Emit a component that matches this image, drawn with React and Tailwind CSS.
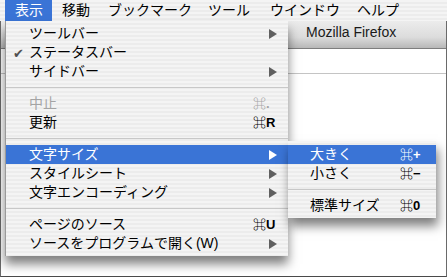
import React from 'react';

const FONT = { fontFamily: '"Liberation Sans", "Noto Sans CJK JP", "DejaVu Sans", sans-serif' };

const stripes =
  'bg-[repeating-linear-gradient(180deg,#f4f4f4_0px,#f4f4f4_2px,#ececec_2px,#ececec_4px)]';

function Arrow({ light }) {
  return (
    <svg width="8" height="10" viewBox="0 0 8 10" className="shrink-0">
      <path d="M0 0 L8 5 L0 10 Z" fill={light ? '#ffffff' : '#5f5f5f'} />
    </svg>
  );
}

function Row({ label, check, shortcut, arrow, disabled, active, pl = 'pl-[23px]', pr = 'pr-[11px]', scW = 'w-[24px]' }) {
  const color = active ? 'text-white' : disabled ? 'text-[#a4a4a4]' : 'text-black';
  return (
    <div className={`relative flex h-[19px] items-center ${pl} ${pr} ${active ? 'bg-[#3a74d6]' : ''} ${color}`}>
      {check && (
        <span className="absolute left-[7px] top-[1px] text-[13px] text-[#505050]">✔</span>
      )}
      <span className="flex-1 text-[14px] leading-[19px] whitespace-nowrap">{label}</span>
      {shortcut && (
        <span className={`${scW} font-semibold text-[13px] leading-[19px] whitespace-nowrap`}>
          {shortcut}
        </span>
      )}
      {arrow && <Arrow light={active} />}
    </div>
  );
}

function Sep() {
  return (
    <div className="flex h-[13px] items-center">
      <div className="h-px w-full bg-[#c8c8c8]" />
    </div>
  );
}

export default function App() {
  const menus = [
    { t: '表示', w: 'w-[47px]', active: true },
    { t: '移動', w: 'w-[46px]' },
    { t: 'ブックマーク', w: 'w-[100px]' },
    { t: 'ツール', w: 'w-[62px]' },
    { t: 'ウインドウ', w: 'w-[87px]' },
    { t: 'ヘルプ', w: 'w-[80px]' },
  ];

  return (
    <div className="relative flex h-[277px] w-[447px] flex-col overflow-hidden bg-white" style={FONT}>
      {/* Menu bar */}
      <div className={`flex h-[21px] shrink-0 items-stretch pl-[5px] ${stripes}`}>
        {menus.map((m) => (
          <div
            key={m.t}
            className={`${m.w} flex items-center pl-[10px] text-[14px] whitespace-nowrap ${
              m.active ? 'bg-[#3a74d6] text-white' : 'text-black'
            }`}
          >
            {m.t}
          </div>
        ))}
      </div>

      {/* Window behind */}
      <div className="flex flex-1 flex-col border-x border-b border-x-[#6a6a6a] border-b-[#4a4a4a]">
        <div className="flex h-[27px] shrink-0 items-center bg-[linear-gradient(180deg,#ececec_0%,#dcdcdc_60%,#b8b8b8_100%)] pl-[305px] pb-[4px] text-[14px] font-medium text-[#1a1a1a]">
          Mozilla Firefox
        </div>
        <div className="h-px bg-[#7e7e7e]" />
        <div className="h-[24px] shrink-0 bg-white" />
        <div className="h-px bg-[#c4c4c4]" />
        <div className="flex-1 bg-white" />
      </div>

      {/* Main menu */}
      <div
        className={`absolute left-[5px] top-[21px] w-[283px] border-l border-[#9a9a9a] pt-[3px] pb-[3px] shadow-[0_8px_10px_rgba(0,0,0,0.5)] ${stripes}`}
      >
        <Row label="ツールバー" arrow />
        <Row label="ステータスバー" check />
        <Row label="サイドバー" arrow />
        <Sep />
        <Row label="中止" shortcut="⌘." disabled />
        <Row label="更新" shortcut="⌘R" />
        <Sep />
        <Row label="文字サイズ" arrow active />
        <Row label="スタイルシート" arrow />
        <Row label="文字エンコーディング" arrow />
        <Sep />
        <Row label="ページのソース" shortcut="⌘U" />
        <Row label="ソースをプログラムで開く(W)" arrow />
      </div>

      {/* Submenu */}
      <div
        className={`absolute left-[288px] top-[141px] w-[148px] pt-[4px] pb-[3px] shadow-[2px_8px_10px_rgba(0,0,0,0.5)] ${stripes}`}
      >
        <Row label="大きく" shortcut="⌘+" active pl="pl-[22px]" pr="pr-[12px]" scW="w-[24px]" />
        <Row label="小さく" shortcut="⌘−" pl="pl-[22px]" pr="pr-[12px]" scW="w-[24px]" />
        <Sep />
        <Row label="標準サイズ" shortcut="⌘0" pl="pl-[22px]" pr="pr-[12px]" scW="w-[24px]" />
      </div>
    </div>
  );
}
